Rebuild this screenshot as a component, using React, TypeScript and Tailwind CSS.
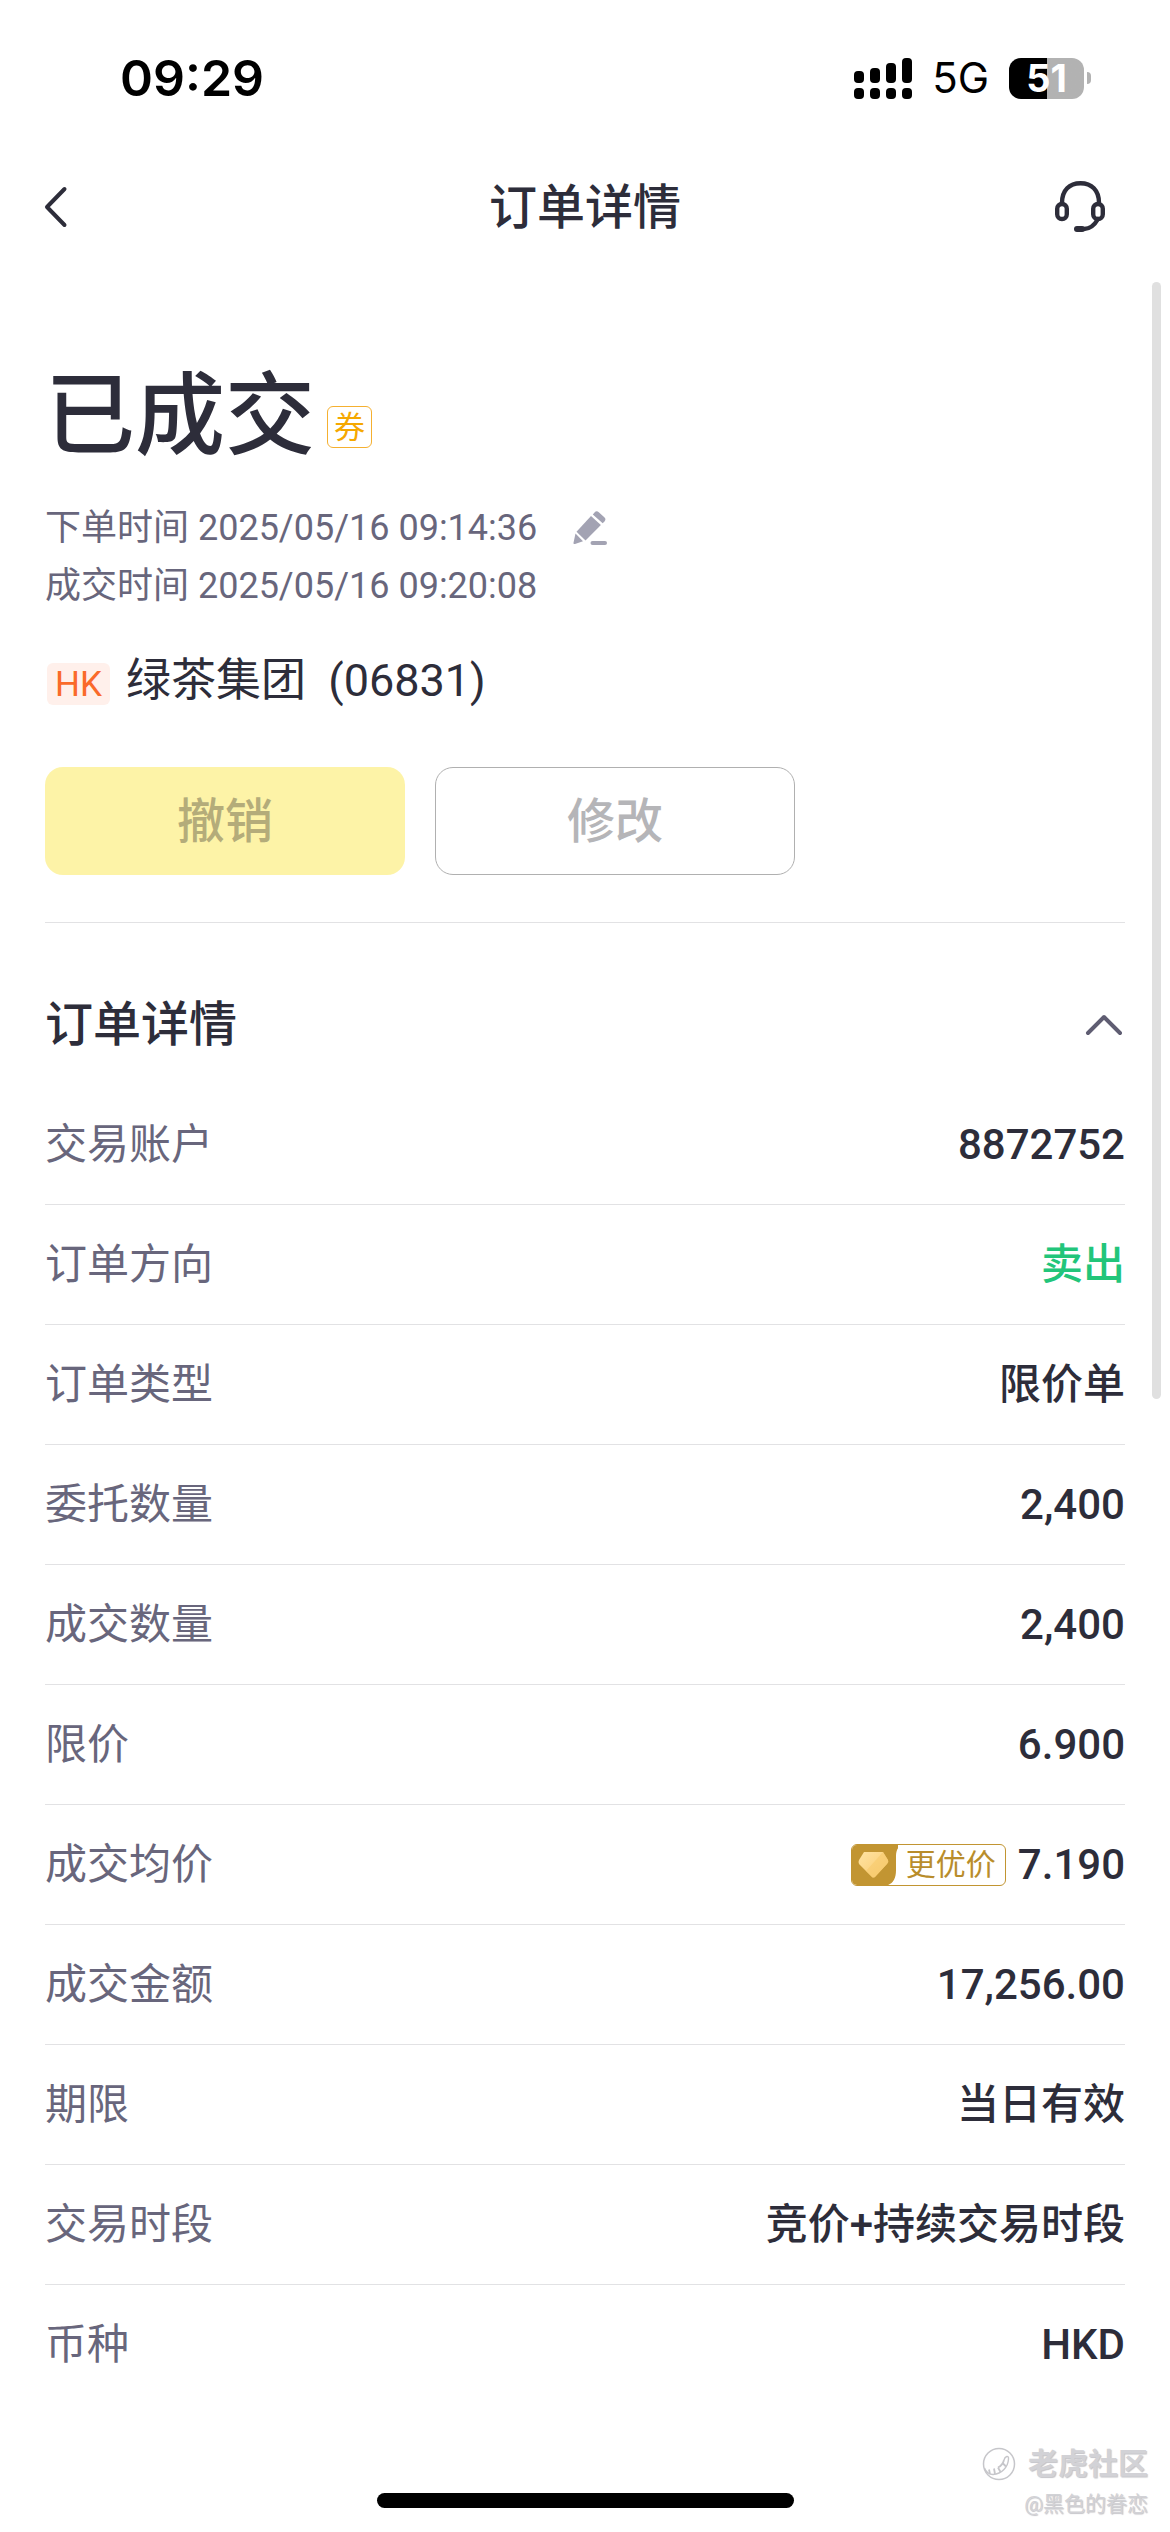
import React, { useState } from "react";

type OrderRow = {
  label: string;
  value: string;
  tone?: "sell";
  better?: boolean;
};

const ROWS: OrderRow[] = [
  { label: "交易账户", value: "8872752" },
  { label: "订单方向", value: "卖出", tone: "sell" },
  { label: "订单类型", value: "限价单" },
  { label: "委托数量", value: "2,400" },
  { label: "成交数量", value: "2,400" },
  { label: "限价", value: "6.900" },
  { label: "成交均价", value: "7.190", better: true },
  { label: "成交金额", value: "17,256.00" },
  { label: "期限", value: "当日有效" },
  { label: "交易时段", value: "竞价+持续交易时段" },
  { label: "币种", value: "HKD" },
];

function SignalIcon() {
  const tops = [13, 10, 5, 0];
  return (
    <svg width="58" height="41" viewBox="0 0 58 41" aria-hidden="true">
      {tops.map((top, i) => (
        <g key={top}>
          <rect x={i * 16} y={top} width="10" height={25 - top} rx="4" />
          <rect x={i * 16} y="30" width="10" height="11" rx="4" />
        </g>
      ))}
    </svg>
  );
}

function Battery() {
  return (
    <div className="flex items-center gap-[3px]">
      <div className="flex h-[41px] w-[75px] items-center justify-center rounded-xl bg-linear-to-r from-black from-51% to-[#b2b2b2] to-51% text-[38px] leading-none font-bold text-white">
        51
      </div>
      <div className="h-3 w-1 rounded-r-full bg-[#b2b2b2]" />
    </div>
  );
}

function StatusBar() {
  return (
    <div className="flex h-[156px] items-center justify-between pr-[79px] pl-[120px] font-['Inter',sans-serif] text-black">
      <div className="text-[50px] leading-none font-semibold">09:29</div>
      <div className="flex items-center gap-5">
        <SignalIcon />
        <span className="text-[42px] leading-none">5G</span>
        <Battery />
      </div>
    </div>
  );
}

function HeadsetIcon() {
  return (
    <svg width="50" height="52" viewBox="0 0 50 52" fill="none" stroke="currentColor" strokeWidth="4.4" strokeLinecap="round" aria-hidden="true">
      <path d="M7 22C7 9 14.500 2.300 25.500 2.300S44 9 44 22" />
      <rect x="2.200" y="23" width="9.600" height="15" rx="4.800" />
      <rect x="38.200" y="23" width="9.600" height="15" rx="4.800" />
      <path d="M43 38C39 45 35 48 29 48H22" />
      <path d="M22 48H27" strokeWidth="6" />
    </svg>
  );
}

function PencilIcon() {
  return (
    <svg width="34" height="34" viewBox="0 0 34 34" fill="currentColor" aria-hidden="true">
      <path d="M21.500 1.600a3 3 0 0 1 4.300-.3l5.500 4.900a3 3 0 0 1 .2 4.200l-1.800 1.900-9.900-8.900z" />
      <path d="M18 5l9.900 9L12.500 29.500 3.500 20.800z" />
      <path d="M2.500 22.600L10 30.300 2 33C1 33.300.300 32.700.500 31.800z" />
      <rect x="17.500" y="30" width="16.500" height="4" rx="2" />
    </svg>
  );
}

function BetterPriceTag() {
  return (
    <span className="flex h-[42px] items-center overflow-hidden rounded-md border border-[#c29532] pr-[9px] text-[30px] leading-none font-normal text-[#b98d2b]">
      <svg width="46" height="42" viewBox="0 0 46 42" className="mr-2" aria-hidden="true">
        <defs>
          <linearGradient id="gem" x1="0" y1="0" x2="1" y2="1">
            <stop offset="0" stopColor="#ffe3a3" />
            <stop offset="1" stopColor="#f9c96a" />
          </linearGradient>
        </defs>
        <path d="M0 0H54C47 1 44 5 44 12V26C44 36 40 41 32 42H0Z" fill="#c29532" />
        <path d="M12 8H31L36 16Q37 18 35 20L23 33Q21 34 20 33L7 20Q6 18 7 16Z" fill="url(#gem)" />
        <path d="M31 8L36 16Q37 18 35 20L23 33Q21 34 20 33L14 27Z" fill="#f6c96c" opacity=".6" />
      </svg>
      更优价
    </span>
  );
}

function Watermark() {
  return (
    <div className="absolute right-[22px] bottom-2 flex flex-col items-end text-[#d2d2d6] [text-shadow:1px_1px_1px_#c4c4c8]">
      <div className="flex items-center gap-3">
        <svg width="34" height="34" viewBox="0 0 34 34" fill="none" stroke="#c6c6ca" aria-hidden="true">
          <circle cx="17" cy="17" r="15.500" strokeWidth="1.500" />
          <path d="M22 13C23 9 27 8 26.500 12C26 20 20 27 11 27.500C7 27.500 4 25 2.500 21" strokeWidth="1.400" />
          <path d="M22 13C21 17 19 19 16 20.500M7 22.500L8 27M12 21.500L13 27M16 20.500L18.500 25M21 16.500L24 19.500" strokeWidth="1.800" />
        </svg>
        <span className="text-[30px] leading-10 font-bold">老虎社区</span>
      </div>
      <span className="text-[21px] leading-10">@黑色的眷恋</span>
    </div>
  );
}

export default function App() {
  const [open, setOpen] = useState(true);

  return (
    <div className="relative flex min-h-screen flex-col bg-white font-['Roboto','Noto_Sans_CJK_SC',sans-serif] text-[#2d2d3a]">
      <StatusBar />

      <header className="flex h-[102px] items-center justify-between pr-[65px] pl-11">
        <button type="button" aria-label="返回" className="flex w-[71px]">
          <svg width="24" height="42" viewBox="0 0 24 42" fill="none" stroke="currentColor" strokeWidth="4" strokeLinecap="round" strokeLinejoin="round" aria-hidden="true">
            <path d="M20.500 3L3 21L20.500 39" />
          </svg>
        </button>
        <h1 className="pt-[2px] text-[48px] leading-none font-medium">订单详情</h1>
        <button type="button" aria-label="客服">
          <HeadsetIcon />
        </button>
      </header>

      <main className="px-[45px] pt-[94px]">
        <div className="flex items-end gap-3">
          <h2 className="text-[90px] leading-[130px] font-medium">已成交</h2>
          <span className="mb-[34px] flex h-[42px] items-center rounded-md border border-[#f5b030] px-[6px] text-[31px] leading-none text-[#f5a800]">券</span>
        </div>

        <div className="mt-[17px] text-[36px] leading-[58px] text-[#68667c]">
          <div className="flex items-center gap-9">
            <span>下单时间 2025/05/16 09:14:36</span>
            <button type="button" aria-label="编辑" className="text-[#a3a3b3]">
              <PencilIcon />
            </button>
          </div>
          <div>成交时间 2025/05/16 09:20:08</div>
        </div>

        <div className="mt-9 flex items-end gap-4 text-[45px] leading-[60px]">
          <span className="mb-[6px] ml-[2px] flex h-[42px] items-center rounded-md bg-[#fff0eb] px-2 text-[35px] leading-none text-[#fa6a2a]">HK</span>
          <span className="whitespace-pre">绿茶集团  (06831)</span>
        </div>

        <div className="mt-[56px] flex gap-[30px] text-[48px] leading-none font-medium">
          <button type="button" disabled className="h-[108px] w-1/3 rounded-[18px] bg-[#fdf3a7] pt-[2px] text-[#b4ac7a]">撤销</button>
          <button type="button" disabled className="h-[108px] w-1/3 rounded-[18px] border border-[#b0b0b0] pt-[2px] text-[#b5b5b8]">修改</button>
        </div>

        <section className="mt-[47px] border-t border-[#e2e2e4] pt-[62px]">
          <button
            type="button"
            aria-expanded={open}
            onClick={() => setOpen(!open)}
            className="flex w-full items-center justify-between text-[48px] leading-[80px] font-medium"
          >
            订单详情
            <svg width="40" height="24" viewBox="0 0 40 24" fill="none" stroke="#5f5d72" strokeWidth="4" strokeLinecap="round" strokeLinejoin="round" className={open ? "" : "rotate-180"} aria-hidden="true">
              <path d="M3 20L19 4L35 20" />
            </svg>
          </button>

          {open && (
            <dl className="mt-5 text-[42px] leading-none">
              {ROWS.map((row) => (
                <div key={row.label} className="flex h-[120px] items-center justify-between border-b border-[#e2e2e4] last:border-b-0">
                  <dt className="text-[#68667c]">{row.label}</dt>
                  <dd className={`flex items-center gap-3 font-medium ${row.tone === "sell" ? "text-[#22c57a]" : ""}`}>
                    {row.better && <BetterPriceTag />}
                    {row.value}
                  </dd>
                </div>
              ))}
            </dl>
          )}
        </section>
      </main>

      <div className="absolute top-[282px] right-[9px] h-[1117px] w-[9px] rounded-full bg-[#e0e0e0]" />
      <Watermark />
      <div className="mx-auto mt-auto mb-6 h-[15px] w-[417px] rounded-full bg-black" />
    </div>
  );
}
